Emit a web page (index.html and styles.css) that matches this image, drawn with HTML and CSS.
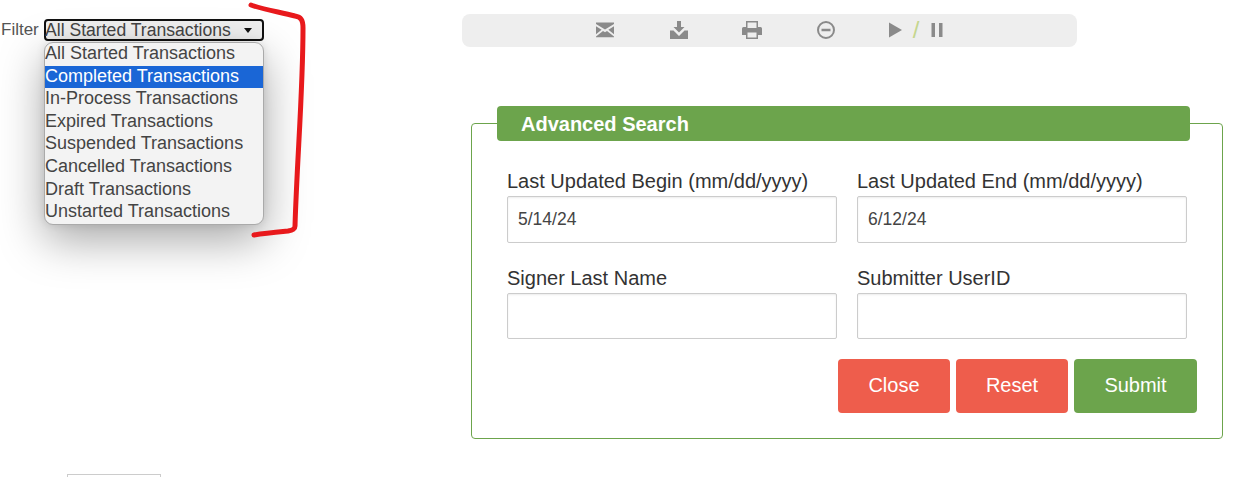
FILE: index.html
```html
<!DOCTYPE html>
<html lang="en">
<head>
    <meta charset="UTF-8">
    <meta name="viewport" content="width=device-width, initial-scale=1.0">
    <title>Transactions</title>
    <link rel="stylesheet" href="styles.css">
</head>
<body>
    <div class="page">
        <div class="left-col">
            <div class="filter-row">
                <span class="filter-label">Filter</span>
                <div class="select-box">
                    <span class="select-value">All Started Transactions</span>
                    <span class="select-arrow"></span>
                </div>
                <ul class="select-list">
                    <li>All Started Transactions</li>
                    <li class="selected">Completed Transactions</li>
                    <li>In-Process Transactions</li>
                    <li>Expired Transactions</li>
                    <li>Suspended Transactions</li>
                    <li>Cancelled Transactions</li>
                    <li>Draft Transactions</li>
                    <li>Unstarted Transactions</li>
                </ul>
            </div>
            <div class="bottom-stub"></div>
        </div>

        <div class="right-col">
            <div class="toolbar">
                <svg class="icon" viewBox="0 0 20 20"><path d="M1 2.500h18v1.600L10 9.600 1 4.100zM1 6.200l5.600 3.500L1 14.300zM19 6.200v8.100l-5.600-4.600zM1 17.300v-.9l7-5.400 2 1.300 2-1.300 7 5.400v.9z"/></svg>
                <svg class="icon" viewBox="0 0 20 20"><path d="M8 1h4v6h3.500L10 12.500 4.500 7H8zM1 10.500h3.500L10 16l5.500-5.500H19V19H1z"/></svg>
                <svg class="icon" viewBox="0 0 20 20"><path fill-rule="evenodd" d="M4 1h12v6h2.500A1.500 1.500 0 0 1 20 8.500V15h-4v4H4v-4H0V8.500A1.500 1.500 0 0 1 1.500 7H4zM5.500 2.500V8h9V2.500zM5.500 12.500v5h9v-5z"/></svg>
                <svg class="icon" viewBox="0 0 20 20"><path fill-rule="evenodd" d="M10 1a9 9 0 1 1 0 18 9 9 0 0 1 0-18zM10 3a7 7 0 1 0 0 14 7 7 0 0 0 0-14zM5.500 8.800h9v2.400h-9z"/></svg>
                <div class="play-group">
                    <svg class="icon" viewBox="0 0 20 20"><path d="M4 2.500l13 7.500-13 7.500z"/></svg>
                    <span class="slash">/</span>
                    <svg class="icon" viewBox="0 0 20 20"><path d="M4.500 3h3.500v14H4.500zM12 3h3.500v14H12z"/></svg>
                </div>
            </div>

            <fieldset class="search-box">
                <legend>Advanced Search</legend>
                <div class="search-body">
                    <div class="field-grid">
                        <div class="field">
                            <label for="begin">Last Updated Begin (mm/dd/yyyy)</label>
                            <input id="begin" class="tall" type="text" value="5/14/24">
                        </div>
                        <div class="field">
                            <label for="end">Last Updated End (mm/dd/yyyy)</label>
                            <input id="end" class="tall" type="text" value="6/12/24">
                        </div>
                        <div class="field">
                            <label for="signer">Signer Last Name</label>
                            <input id="signer" type="text">
                        </div>
                        <div class="field">
                            <label for="submitter">Submitter UserID</label>
                            <input id="submitter" type="text">
                        </div>
                    </div>
                    <div class="actions">
                        <button class="btn btn-red">Close</button>
                        <button class="btn btn-red">Reset</button>
                        <button class="btn btn-green btn-wide">Submit</button>
                    </div>
                </div>
            </fieldset>
        </div>
    </div>

    <!-- red marker drawn over the screenshot -->
    <svg class="marker" viewBox="0 0 1252 477"><path d="M251 5 C265 10 280 12 295 16 C301 17 303 20 303 28 C303 90 297 160 295 226 C295 229 293 230 288 231 C277 232 265 233 254 235"/></svg>
</body>
</html>
```
FILE: styles.css
```css
body {
    margin: 0;
    height: 477px;
    overflow: hidden;
    background-color: white;
    font-family: "Liberation Sans", Arial, sans-serif;
    font-size: 18px;
    color: #444;
}

.page {
    display: flex;
    height: 477px;
    overflow: hidden;
}

.left-col {
    width: 462px;
    flex: none;
    padding-top: 19px;
    box-sizing: border-box;
}

.right-col {
    width: 770px;
    padding-top: 14px;
}

/* filter dropdown */
.filter-row {
    position: relative;
    display: flex;
    align-items: center;
    height: 22px;
    padding-left: 1px;
}

.filter-label {
    width: 43px;
    font-size: 17px;
    color: #555;
}

.select-box {
    display: flex;
    align-items: center;
    justify-content: space-between;
    width: 220px;
    height: 22px;
    padding: 0 10px 0 0;
    box-sizing: border-box;
    border: 2px solid #111;
    border-radius: 4px;
    background-color: #f0f0f0;
    font-size: 17.6px;
    white-space: nowrap;
}

.select-value {
    margin-left: -1px;
}

.select-arrow {
    width: 0;
    height: 0;
    border-left: 4px solid transparent;
    border-right: 4px solid transparent;
    border-top: 5px solid #111;
}

.select-list {
    position: absolute;
    top: 23px;
    left: 44px;
    width: 220px;
    height: 183px;
    margin: 0;
    padding: 0;
    box-sizing: border-box;
    list-style: none;
    background-color: #f3f3f3;
    border: 1px solid #aaa;
    border-radius: 9px;
    overflow: hidden;
    box-shadow: 0 15px 45px rgba(0,0,0,0.35), 0 0 9px rgba(0,0,0,0.1);
}

.select-list li {
    height: 22.6px;
    line-height: 21px;
    white-space: nowrap;
}

.select-list .selected {
    background-color: #1a66d6;
    color: white;
}

.bottom-stub {
    width: 94px;
    height: 3px;
    margin: 433px 0 0 67px;
    box-sizing: border-box;
    border: 1px solid #ccc;
    border-bottom: none;
}

/* toolbar */
.toolbar {
    display: flex;
    align-items: center;
    gap: 53.5px;
    width: 615px;
    height: 33px;
    padding: 0 0 2px 133px;
    box-sizing: border-box;
    background-color: #eee;
    border-radius: 8px;
}

.icon {
    width: 20px;
    height: 20px;
    flex: none;
    fill: #8a8a8a;
}

.play-group {
    display: flex;
    align-items: center;
    gap: 5px;
    margin-left: -4px;
}

.slash {
    width: 12px;
    text-align: center;
    font-size: 24px;
    line-height: 20px;
    color: #c5d68e;
}

/* search form */
.search-box {
    width: 752px;
    height: 333px;
    margin: 59px 0 0 9px;
    padding: 0;
    box-sizing: border-box;
    border: 1px solid #6ca44c;
    border-radius: 4px;
}

.search-box legend {
    width: 693px;
    height: 35px;
    margin-left: 25px;
    padding: 0 0 0 24px;
    box-sizing: border-box;
    background-color: #6ca44c;
    border-radius: 4px;
    color: white;
    font-size: 20px;
    font-weight: bold;
    line-height: 37px;
}

.search-body {
    padding: 0 25px 0 35px;
}

.field-grid {
    display: grid;
    grid-template-columns: 330px 330px;
    column-gap: 20px;
    row-gap: 23px;
    margin-top: 28px;
}

.field label {
    display: block;
    height: 27px;
    color: #333;
    font-size: 20px;
    line-height: 24px;
}

.field input {
    display: block;
    width: 100%;
    height: 46px;
    padding: 0 10px;
    box-sizing: border-box;
    border: 1px solid #ccc;
    border-radius: 2px;
    box-shadow: inset 0 1px 2px rgba(0,0,0,0.08);
    font-family: inherit;
    font-size: 17.5px;
    color: #444;
}

.field input.tall {
    height: 47px;
}

.actions {
    display: flex;
    justify-content: flex-end;
    gap: 6px;
    margin-top: 20px;
}

.btn {
    width: 112px;
    height: 54px;
    padding: 0 0 2px;
    border: none;
    border-radius: 4px;
    color: white;
    font-family: inherit;
    font-size: 20px;
}

.btn-wide {
    width: 123px;
}

.btn-red {
    background-color: #ee5d4c;
}

.btn-green {
    background-color: #6ca44c;
}

/* annotation layer */
.marker {
    position: absolute;
    top: 0;
    left: 0;
    width: 1252px;
    height: 477px;
    pointer-events: none;
}

.marker path {
    fill: none;
    stroke: #e8191c;
    stroke-width: 5;
    stroke-linecap: round;
    stroke-linejoin: round;
}
```
